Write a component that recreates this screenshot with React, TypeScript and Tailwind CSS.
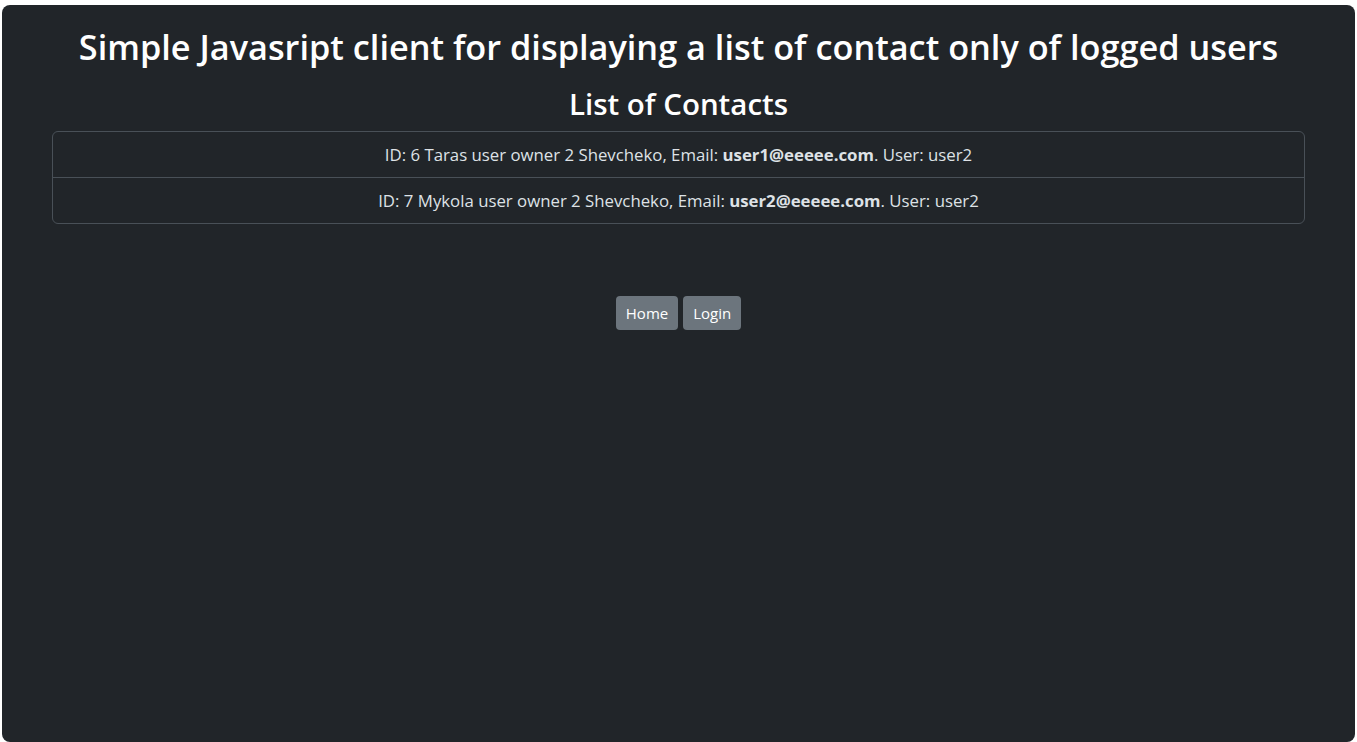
export default function App() {
  const contacts = [
    { id: 6, name: "Taras", email: "user1@eeeee.com", user: "user2" },
    { id: 7, name: "Mykola", email: "user2@eeeee.com", user: "user2" },
  ];

  return (
    <div className="min-h-[742px] bg-white pt-[5px] px-[2px] font-['Open_Sans',sans-serif]">
      <div className="h-[737px] rounded-lg bg-[#212529] text-[#dee2e6] px-[50px] pt-[18px]">
        <h1 className="whitespace-nowrap text-center text-[34.3px] leading-[48px] font-semibold text-white">
          Simple Javasript client for displaying a list of contact only of logged users
        </h1>
        <h2 className="mt-[13px] text-center text-[29.5px] leading-[40px] font-semibold text-white">
          List of Contacts
        </h2>
        <ul className="mt-[7px] rounded-md border border-[#495057]">
          {contacts.map((c, i) => (
            <li
              key={c.id}
              className={`box-content h-[45px] flex items-center justify-center text-[16.8px] ${
                i > 0 ? "border-t border-[#495057]" : ""
              }`}
            >
              <span>
                ID: {c.id} {c.name} user owner 2 Shevcheko, Email:{" "}
                <b className="font-bold">{c.email}</b>. User: {c.user}
              </span>
            </li>
          ))}
        </ul>
        <div className="mt-[72px] flex justify-center gap-[5px]">
          <button className="h-[34px] px-[10px] rounded bg-[#6c757d] text-white text-[15px]">
            Home
          </button>
          <button className="h-[34px] px-[10px] rounded bg-[#6c757d] text-white text-[15px]">
            Login
          </button>
        </div>
      </div>
    </div>
  );
}
